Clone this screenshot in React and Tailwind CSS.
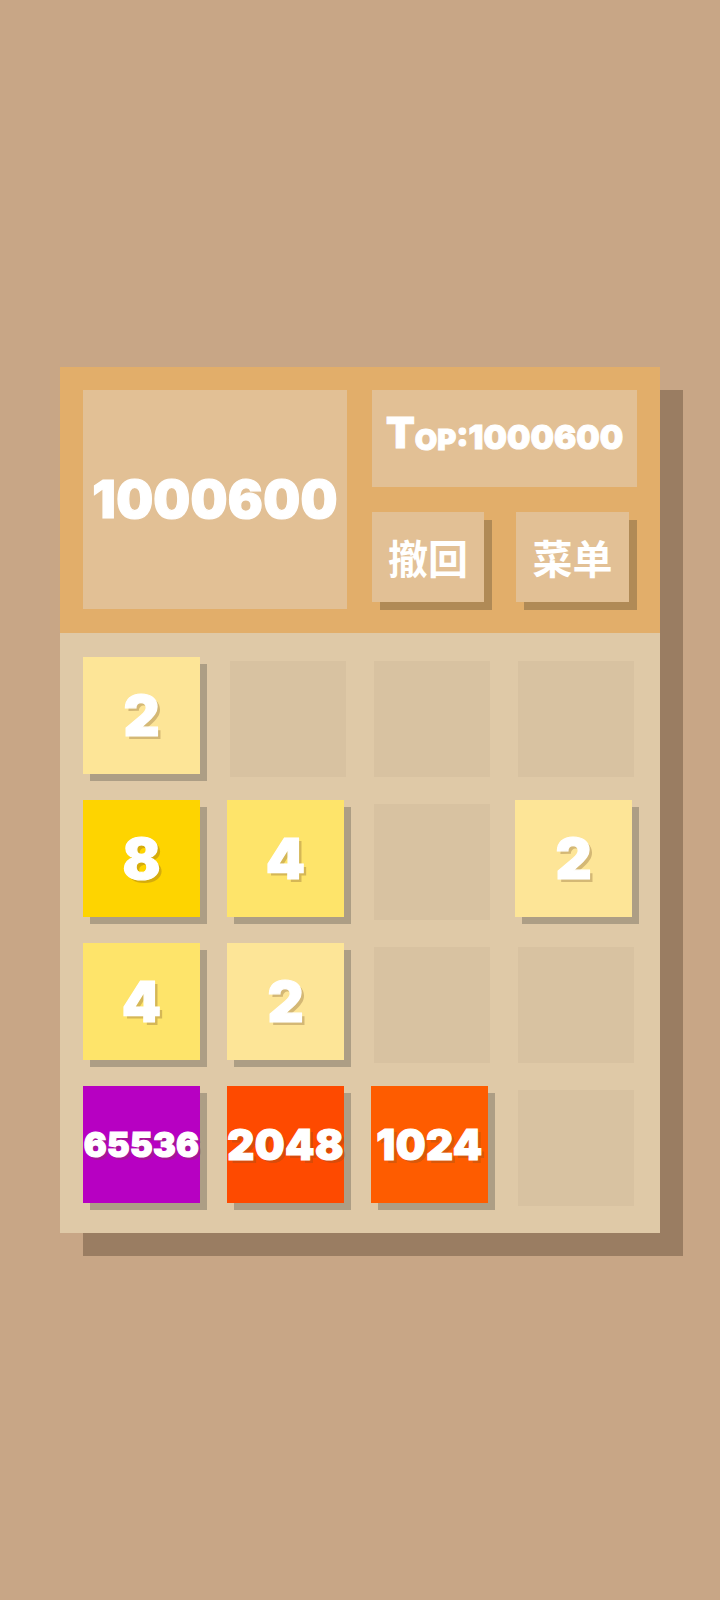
import React from "react";

const FONT = "font-['Inter','Noto_Sans','Noto_Sans_CJK_SC',sans-serif]";

const tileStyles = {
  2: { bg: "bg-[#fde597]", text: "text-[56px]" },
  4: { bg: "bg-[#fee46a]", text: "text-[56px]" },
  8: { bg: "bg-[#fed400]", text: "text-[56px]" },
  1024: { bg: "bg-[#fe5c00]", text: "text-[42px] tracking-[0.01em]" },
  2048: { bg: "bg-[#fe4a00]", text: "text-[42px] tracking-[0.01em]" },
  65536: { bg: "bg-[#b700c2]", text: "text-[34px] tracking-[0.01em]" },
};

const board = [
  [2, 0, 0, 0],
  [8, 4, 0, 2],
  [4, 2, 0, 0],
  [65536, 2048, 1024, 0],
];

function Cell({ value }) {
  if (!value) {
    return <div className="w-[116px] h-[116px] bg-[#d8c2a1]" />;
  }
  const s = tileStyles[value];
  return (
    <div className="w-[116px] h-[116px]">
      <div
        className={`w-[117px] h-[117px] -translate-x-[3px] -translate-y-[4px] ${s.bg} shadow-[7px_7px_0_#ad9e85] flex items-center justify-center text-white font-black leading-none ${s.text} [-webkit-text-stroke:1.2px_white] [text-shadow:3px_3px_0_rgba(120,80,40,0.3)]`}
      >
        {value}
      </div>
    </div>
  );
}

export default function App() {
  return (
    <div className={`min-h-[1600px] w-full bg-[#c8a686] flex items-center justify-center ${FONT}`}>
      <div className="w-[600px] shadow-[23px_23px_0_#9a7d62]">
        <div className="bg-[#e2ae6a] pt-[23px] pb-[24px] px-[23px] flex gap-[25px]">
          <div className="w-[264px] h-[219px] bg-[#e2c095] flex items-center justify-center text-white font-black text-[52px] leading-none tracking-[0.005em] [-webkit-text-stroke:1.2px_white]">
            1000600
          </div>
          <div className="flex-1 flex flex-col gap-[25px]">
            <div className="h-[97px] bg-[#e2c095] flex items-end justify-center pb-[33px] text-white font-black leading-none [-webkit-text-stroke:1px_white]">
              <span className="text-[42px]">T</span>
              <span className="text-[29px]">OP</span>
              <span className="text-[33px]">:1000600</span>
            </div>
            <div className="flex gap-[32px]">
              <div className="w-[112px] h-[90px] bg-[#e2c095] shadow-[8px_8px_0_#b08a56] flex items-center justify-center text-white font-bold text-[40px] leading-none font-['Noto_Sans_CJK_SC',sans-serif]">
                撤回
              </div>
              <div className="w-[113px] h-[90px] bg-[#e2c095] shadow-[8px_8px_0_#b08a56] flex items-center justify-center text-white font-bold text-[40px] leading-none font-['Noto_Sans_CJK_SC',sans-serif]">
                菜单
              </div>
            </div>
          </div>
        </div>
        <div className="bg-[#dfc9a7] h-[600px] px-[26px] pt-[28px] grid grid-cols-[repeat(4,116px)] grid-rows-[repeat(4,116px)] gap-x-[28px] gap-y-[27px]">
          {board.flat().map((v, i) => (
            <Cell key={i} value={v} />
          ))}
        </div>
      </div>
    </div>
  );
}
